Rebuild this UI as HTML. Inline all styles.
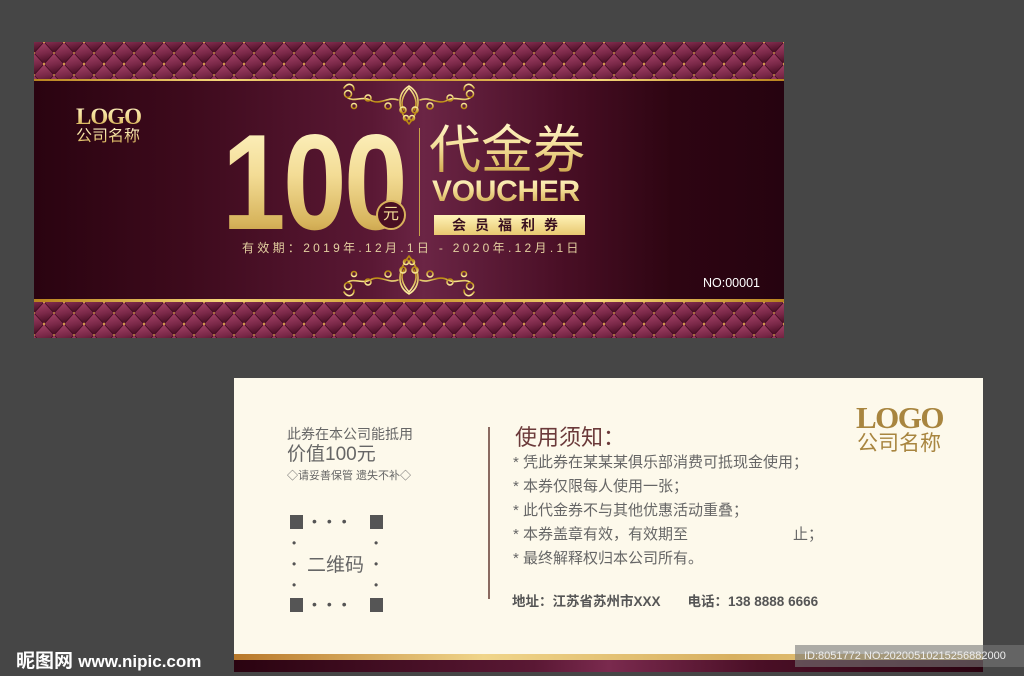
<!DOCTYPE html>
<html><head><meta charset="utf-8"><style>
*{margin:0;padding:0;box-sizing:border-box}
body{width:1024px;height:676px;background:#464646;position:relative;overflow:hidden;font-family:"Liberation Sans","Noto Sans CJK SC",sans-serif}
.abs{position:absolute}
.gold{background:linear-gradient(180deg,#fff6c8 0%,#f3dc95 45%,#d7b45c 80%,#b88a35 100%);-webkit-background-clip:text;background-clip:text;color:transparent}
</style></head><body>
<svg width="0" height="0" style="position:absolute">
<defs>
<linearGradient id="dg" x1="0" y1="0" x2="0.2" y2="1"><stop offset="0" stop-color="#a8456a"/><stop offset="0.6" stop-color="#7a2848"/><stop offset="1" stop-color="#4e1028"/></linearGradient>
<g id="dm"><polygon points="10,0.5 19.5,11 10,21.5 0.5,11" fill="url(#dg)"/></g>
<pattern id="q" width="20" height="22" patternUnits="userSpaceOnUse">
<rect width="20" height="22" fill="#3a0a1c"/>
<use href="#dm"/>
<use href="#dm" x="-10" y="-11"/><use href="#dm" x="10" y="-11"/><use href="#dm" x="-10" y="11"/><use href="#dm" x="10" y="11"/>
<circle cx="10" cy="0.5" r="0.9" fill="#e8b050"/><circle cx="0" cy="11" r="0.9" fill="#e8b050"/><circle cx="20" cy="11" r="0.9" fill="#e8b050"/><circle cx="10" cy="21.5" r="0.9" fill="#e8b050"/>
</pattern>
<linearGradient id="gl" x1="0" y1="0" x2="0" y2="1"><stop offset="0" stop-color="#fff0a0"/><stop offset="1" stop-color="#b8860b"/></linearGradient>
<g id="orn" fill="none" stroke="url(#gl)" stroke-width="1.6" stroke-linecap="round">
<path d="M69,44 C58,30 56,14 69,6 C82,14 80,30 69,44"/>
<path d="M69,8 C62,16 60,24 64,30 M69,8 C76,16 78,24 74,30"/>
<circle cx="63" cy="30" r="3"/><circle cx="75" cy="30" r="3"/><circle cx="66" cy="38" r="2.5"/><circle cx="72" cy="38" r="2.5"/>
<path d="M58,20 C48,16 40,26 30,20 C22,16 14,22 8,18 M80,20 C90,16 98,26 108,20 C116,16 124,22 130,18"/>
<circle cx="28" cy="18" r="3"/><circle cx="110" cy="18" r="3"/><circle cx="8" cy="14" r="3.5"/><circle cx="130" cy="14" r="3.5"/>
<path d="M4,8 C8,2 14,4 14,10 M134,8 C130,2 124,4 124,10"/>
<circle cx="48" cy="26" r="3"/><circle cx="90" cy="26" r="3"/><circle cx="14" cy="26" r="2.5"/><circle cx="124" cy="26" r="2.5"/>
</g>
</defs></svg>

<!-- top card -->
<div class="abs" style="left:34px;top:42px;width:750px;height:296px;overflow:hidden">
<svg class="abs" style="left:0;top:0" width="750" height="37"><rect width="750" height="37" fill="url(#q)"/></svg>
<svg class="abs" style="left:0;top:260px" width="750" height="36"><rect width="750" height="36" fill="url(#q)"/></svg>
<div class="abs" style="left:0;top:37px;width:750px;height:2px;background:linear-gradient(90deg,#b8821e,#f5d67a,#c8922a,#f5d67a,#b8821e)"></div>
<div class="abs" style="left:0;top:39px;width:750px;height:218px;background:linear-gradient(90deg,#2a0310 0%,#3d0a1c 20%,#5a1834 45%,#6b2545 52%,#4a0f26 70%,#2e0512 85%,#260310 100%)"></div>
<div class="abs" style="left:0;top:257px;width:750px;height:3px;background:linear-gradient(90deg,#b8821e,#f5d67a,#c8922a,#f5d67a,#b8821e)"></div>
</div>
<svg class="abs" style="left:340px;top:80px" width="138" height="46"><use href="#orn"/></svg>
<svg class="abs" style="left:340px;top:254px" width="138" height="46"><g transform="translate(0,46) scale(1,-1)"><use href="#orn"/></g></svg>

<div class="abs gold" style="left:76px;top:104px;font:bold 23px 'Liberation Serif',serif;letter-spacing:-1px">LOGO</div>
<div class="abs gold" style="left:76px;top:128px;font-size:16px;line-height:18px">公司名称</div>

<div class="abs gold" style="left:222px;top:114px;font-weight:bold;font-size:136px;line-height:136px;letter-spacing:-3px;transform:scaleX(0.84);transform-origin:0 0">100</div>
<div class="abs" style="left:376px;top:200px;width:30px;height:30px;border-radius:50%;background:#4a0f22;border:2px solid #d9b25c;color:#f3dc95;font-size:16px;line-height:26px;text-align:center">元</div>
<div class="abs" style="left:419px;top:128px;width:1px;height:108px;background:#c9a24a"></div>
<div class="abs gold" style="left:429px;top:122px;font-size:52px;line-height:58px">代金券</div>
<div class="abs gold" style="left:432px;top:176px;font-weight:bold;font-size:30px;line-height:32px;letter-spacing:-0.3px">VOUCHER</div>
<div class="abs" style="left:434px;top:215px;width:151px;height:20px;background:linear-gradient(180deg,#fff3b8,#e8c870);color:#3a1020;font-size:14px;line-height:20px;letter-spacing:9px;text-align:center;font-weight:bold">会员福利券</div>
<div class="abs" style="left:242px;top:239px;color:#e3cfa0;font-size:12px;letter-spacing:3.3px;white-space:nowrap">有效期：2019年.12月.1日 - 2020年.12月.1日</div>
<div class="abs" style="left:703px;top:276px;color:#fff;font-size:12.5px">NO:00001</div>

<!-- bottom card -->
<div class="abs" style="left:234px;top:378px;width:749px;height:294px;background:#fdf9eb;overflow:hidden">
<div class="abs" style="left:0;top:276px;width:749px;height:6px;background:linear-gradient(90deg,#b8782a,#f0d58a,#d8b060,#f0d890)"></div>
<div class="abs" style="left:0;top:282px;width:749px;height:12px;background:linear-gradient(90deg,#2a0310,#5a1834 40%,#7a2a4e 50%,#4a0f26 70%,#2a0310)"></div>
</div>
<div class="abs" style="left:287px;top:424px;color:#666;font-size:14px">此券在本公司能抵用</div>
<div class="abs" style="left:287px;top:439px;color:#666;font-size:19px">价值100元</div>
<div class="abs" style="left:287px;top:467px;color:#666;font-size:11px">◇请妥善保管 遗失不补◇</div>
<div class="abs" style="left:290px;top:515px;width:13px;height:14px;background:#555"></div>
<div class="abs" style="left:370px;top:515px;width:13px;height:14px;background:#555"></div>
<div class="abs" style="left:290px;top:598px;width:13px;height:14px;background:#555"></div>
<div class="abs" style="left:370px;top:598px;width:13px;height:14px;background:#555"></div>
<div class="abs" style="left:312px;top:513px;color:#555;font-size:14px;letter-spacing:10px">•••</div>
<div class="abs" style="left:312px;top:596px;color:#555;font-size:14px;letter-spacing:10px">•••</div>
<div class="abs" style="left:292px;top:533px;color:#555;font-size:12px;line-height:21px">•<br>•<br>•</div>
<div class="abs" style="left:374px;top:533px;color:#555;font-size:12px;line-height:21px">•<br>•<br>•</div>
<div class="abs" style="left:307px;top:550px;color:#666;font-size:19px">二维码</div>
<div class="abs" style="left:488px;top:427px;width:2px;height:172px;background:#8a6a60"></div>
<div class="abs" style="left:515px;top:420px;color:#6b3a3a;font-size:22px">使用须知：</div>
<div class="abs" style="left:513px;top:451px;color:#666;font-size:15px;line-height:24px;white-space:nowrap">
* 凭此券在某某某俱乐部消费可抵现金使用；<br>* 本券仅限每人使用一张；<br>* 此代金券不与其他优惠活动重叠；<br>* 本券盖章有效，有效期至　　　　　　　止；<br>* 最终解释权归本公司所有。</div>
<div class="abs" style="left:512px;top:590px;color:#555;font-size:13.5px;font-weight:bold;white-space:nowrap">地址：江苏省苏州市XXX　　电话：138 8888 6666</div>
<div class="abs" style="left:856px;top:400px;color:#a8853f;font:bold 31px 'Liberation Serif',serif;letter-spacing:-1.5px">LOGO</div>
<div class="abs" style="left:857px;top:432px;color:#a8853f;font-size:21px;line-height:24px">公司名称</div>

<!-- watermarks -->
<div class="abs" style="left:16px;top:646px;color:#fff;font-size:19px;font-weight:bold;white-space:nowrap">昵图网 <span style="font-size:17px">www.nipic.com</span></div>
<div class="abs" style="left:795px;top:645px;width:229px;height:22px;background:rgba(120,120,120,0.6);color:#eee;font-size:11px;line-height:22px;padding-left:9px;white-space:nowrap">ID:8051772 NO:20200510215256882000</div>
</body></html>
